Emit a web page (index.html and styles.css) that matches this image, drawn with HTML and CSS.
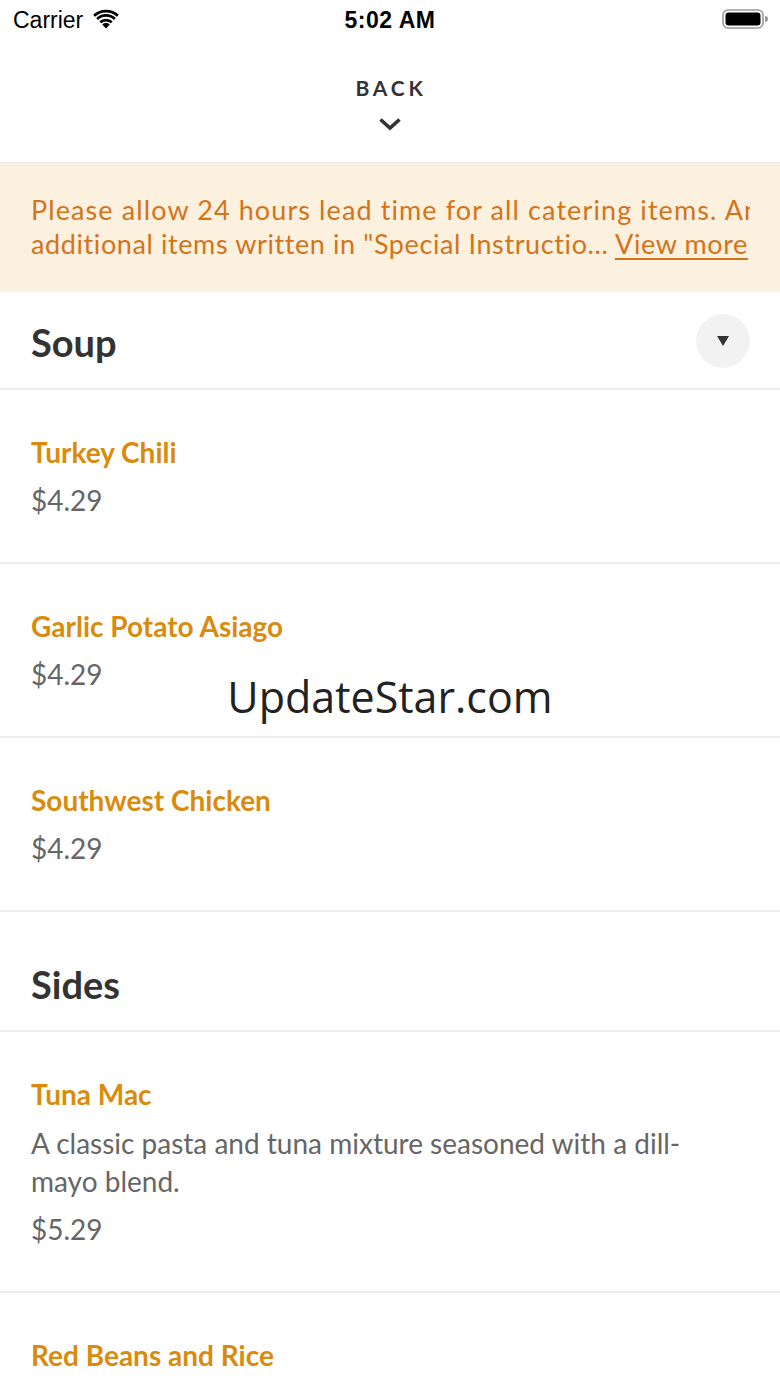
FILE: index.html
```html
<!DOCTYPE html>
<html lang="en">
<head>
    <meta charset="UTF-8" />
    <title>Catering Menu</title>
    <link rel="stylesheet" href="styles.css">
</head>
<body>
    <div class="status">
        <div class="status-left">
            <span>Carrier</span>
            <svg class="wifi" width="26" height="20" viewBox="0 0 26 20">
                <path d="M13 19.5 L9.2 15.4 A5.6 5.6 0 0 1 16.8 15.4 Z" fill="#000"/>
                <path d="M6.3 12.3 A9.8 9.8 0 0 1 19.7 12.3 L17.9 14.3 A7.2 7.2 0 0 0 8.1 14.3 Z" fill="#000"/>
                <path d="M3.2 9 A14.2 14.2 0 0 1 22.8 9 L21 11 A11.6 11.6 0 0 0 5 11 Z" fill="#000"/>
                <path d="M0.2 5.8 A18.6 18.6 0 0 1 25.8 5.8 L24 7.8 A16 16 0 0 0 2 7.8 Z" fill="#000"/>
            </svg>
        </div>
        <div class="status-time">5:02 AM</div>
        <div class="status-right">
            <svg width="46" height="22" viewBox="0 0 46 22">
                <rect x="1" y="2" width="40" height="18" rx="5" fill="none" stroke="#999" stroke-width="1.6"/>
                <rect x="3.5" y="4.5" width="35" height="13" rx="3" fill="#000"/>
                <path d="M43 8 A3 3 0 0 1 43 14 Z" fill="#999"/>
            </svg>
        </div>
    </div>

    <div class="header">
        <div class="back">BACK</div>
        <svg class="chevron" width="24" height="14" viewBox="0 0 24 14">
            <path d="M2.5 2.5 L12 11 L21.5 2.5" fill="none" stroke="#333" stroke-width="3.6"/>
        </svg>
    </div>

    <div class="notice">
        <div class="notice-line wide">Please allow 24 hours lead time for all catering items. Any</div>
        <div class="notice-line">additional items written in "Special Instructio... <a class="more">View more</a></div>
    </div>

    <div class="section first">
        <h2>Soup</h2>
        <div class="toggle"><span class="tri"></span></div>
    </div>
    <div class="item">
        <div class="name">Turkey Chili</div>
        <div class="price">$4.29</div>
    </div>
    <div class="item">
        <div class="name">Garlic Potato Asiago</div>
        <div class="price">$4.29</div>
    </div>
    <div class="item">
        <div class="name">Southwest Chicken</div>
        <div class="price">$4.29</div>
    </div>

    <div class="section">
        <h2>Sides</h2>
    </div>
    <div class="item">
        <div class="name">Tuna Mac</div>
        <div class="desc">A classic pasta and tuna mixture seasoned with a dill-mayo blend.</div>
        <div class="price">$5.29</div>
    </div>
    <div class="item">
        <div class="name">Red Beans and Rice</div>
    </div>

    <div class="watermark">UpdateStar.com</div>
</body>
</html>
```

FILE: styles.css
```css
*{
    margin:0;
    padding:0;
    box-sizing:border-box;
}
body{
    width:780px;
    height:1387px;
    overflow:hidden;
    font-family:"Lato","Noto Sans",sans-serif;
    background:#fff;
    position:relative;
}
.status{
    height:40px;
    display:flex;
    align-items:center;
    justify-content:space-between;
    padding:0 12px 0 13px;
    font-family:"Liberation Sans","DejaVu Sans",sans-serif;
    font-size:23px;
    color:#000;
    position:relative;
}
.status-left{
    display:flex;
    align-items:center;
    gap:10px;
}
.wifi{
    margin-top:-2px;
}
.status-time{
    position:absolute;
    left:0;
    right:0;
    text-align:center;
    font-weight:bold;
    letter-spacing:.5px;
}
.status-right{
    display:flex;
    margin-top:-2px;
}
.header{
    height:123px;
    border-bottom:1px solid #ececec;
    display:flex;
    flex-direction:column;
    align-items:center;
    padding-top:34px;
}
.back{
    font-size:21px;
    font-weight:bold;
    letter-spacing:3.8px;
    color:#333;
    line-height:28px;
    padding-left:2px;
}
.chevron{
    margin-top:15px;
}
.notice{
    background:#fcf0df;
    height:129px;
    padding:30px 30px 0 31px;
    color:#d3741a;
    font-size:27px;
    letter-spacing:.6px;
    line-height:34px;
}
.notice-line{
    white-space:nowrap;
    overflow:hidden;
}
.notice-line.wide{
    letter-spacing:1.1px;
}
.more{
    text-decoration:underline;
    text-underline-offset:4px;
}
.section{
    display:flex;
    align-items:center;
    justify-content:space-between;
    padding:46px 30px 20px 31px;
    border-bottom:2px solid #eeeeee;
}
.section.first{
    padding-top:24px;
}
.section h2{
    font-size:38px;
    font-weight:bold;
    color:#333;
    line-height:52px;
}
.toggle{
    width:54px;
    height:54px;
    border-radius:50%;
    background:#f2f2f2;
    display:flex;
    align-items:center;
    justify-content:center;
    margin-top:-2px;
}
.tri{
    width:0;
    height:0;
    border-left:6px solid transparent;
    border-right:6px solid transparent;
    border-top:10px solid #333;
}
.item{
    padding:44px 31px 44px;
    border-bottom:2px solid #eeeeee;
}
.name{
    font-size:28px;
    font-weight:bold;
    color:#d98b0e;
    line-height:36px;
}
.desc{
    font-size:28px;
    color:#666;
    line-height:38px;
    margin-top:12px;
    padding-right:50px;
}
.price{
    font-size:28px;
    color:#666;
    line-height:36px;
    margin-top:12px;
}
.desc + .price{
    margin-top:11px;
}
.watermark{
    position:absolute;
    top:670px;
    left:0;
    right:0;
    text-align:center;
    font-family:"Open Sans",sans-serif;
    font-size:43px;
    color:#222;
    line-height:54px;
}
```
